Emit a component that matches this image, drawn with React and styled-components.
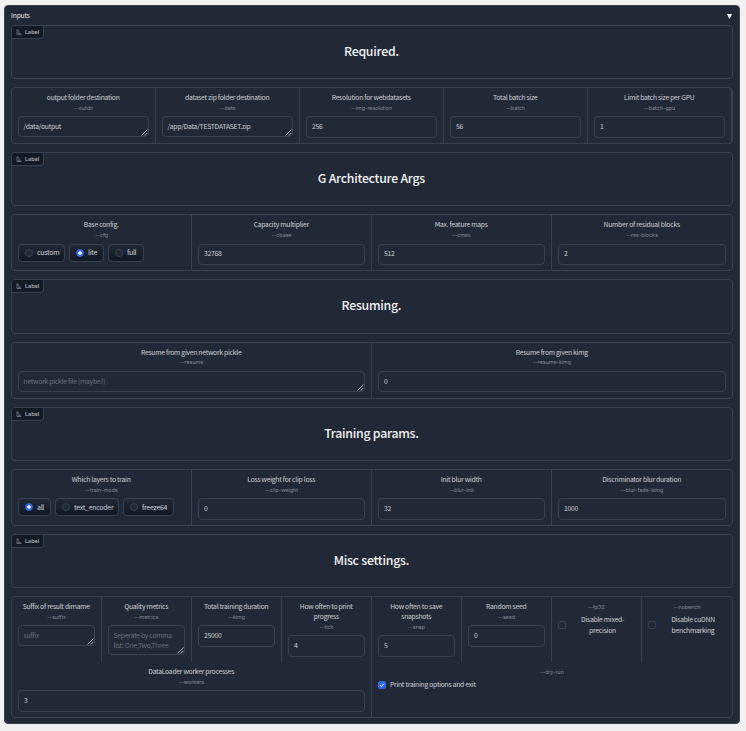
import React from "react";
import styled, { createGlobalStyle } from "styled-components";

const line = "#38424f";
const surface = "#222936";
const sans = '"Noto Sans CJK JP", "Noto Sans CJK SC", "Open Sans", sans-serif';

const GlobalStyle = createGlobalStyle`
  * { box-sizing: border-box; }
  body { margin: 0; background: #f1f1f1; font-family: ${sans}; }
`;

const Page = styled.main`
  width: 746px;
  height: 731px;
  padding: 5px 6px 7px 4px;
  overflow: hidden;
`;

const Panel = styled.section`
  width: 736px;
  height: 719px;
  border: 1px solid ${line};
  border-radius: 4px;
  background: ${surface};
  padding: 0 6px;
  color: #cccfd4;
`;

const PanelHeader = styled.header`
  height: 19px;
  padding-bottom: 1.4px;
  display: flex;
  align-items: center;
  justify-content: space-between;
  font-size: 6.8px;
  letter-spacing: -0.25px;
  line-height: 10px;
  color: #e2e4e8;
`;

const Arrow = styled.svg`
  width: 5px;
  height: 5px;
  margin: 2.4px 1px 0 0;
  fill: #fff;
`;

const Stack = styled.div`
  display: flex;
  flex-direction: column;
  gap: 8px;
`;

const Banner = styled.div`
  position: relative;
  height: 54.2px;
  border: 1px solid ${line};
  border-radius: 4px;
  display: flex;
  align-items: center;
  justify-content: center;
`;

const Heading = styled.h2`
  margin: 0;
  padding: 0 1.2px 2px 0;
  font-size: 12.3px;
  letter-spacing: -0.25px;
  line-height: 16px;
  font-weight: 500;
  color: #f1f2f4;
`;

const Badge = styled.div`
  position: absolute;
  left: 0;
  top: 0;
  width: 32px;
  height: 13px;
  padding: 0.2px 0 0 4px;
  display: flex;
  align-items: center;
  gap: 3px;
  background: #141926;
  border-right: 1px solid ${line};
  border-bottom: 1px solid ${line};
  border-radius: 3px 0 4px 0;
  font-size: 5.4px;
  font-weight: 600;
  line-height: 8px;
  font-family: "Inter", sans-serif;
  color: #a9aeb8;
`;

const BadgeIcon = styled.svg`
  width: 6px;
  height: 6px;
  fill: none;
  stroke: #858b97;
  stroke-width: 0.7;
`;

const FieldGrid = styled.div`
  height: ${(p) => (p.$tall ? "121.8px" : "57px")};
  border: 1px solid ${line};
  border-radius: 4px;
  display: grid;
  grid-template-columns: repeat(${(p) => p.$cols}, 1fr);
  ${(p) => p.$tall && "grid-template-rows: 65px 1fr;"}
`;

const Cell = styled.div`
  grid-column: span ${(p) => p.$span || 1};
  min-width: 0;
  padding: 4.05px 6px 0;
  ${(p) => !p.$open && `border-right: 1px solid ${line};`}
`;

const Caption = styled.div`
  padding-right: 0.6px;
  font-size: 6.8px;
  letter-spacing: -0.27px;
  line-height: 10px;
  text-align: center;
`;

const Hint = styled.div`
  height: 10px;
  padding-top: 0.8px;
  font-family: "Inter", sans-serif;
  font-size: 5.3px;
  line-height: 10px;
  text-align: center;
  color: #858b96;
`;

const ControlWrap = styled.div`
  margin-top: 4.15px;
  position: relative;
`;

const controlBox = `
  display: block;
  width: 100%;
  border: 1px solid ${line};
  border-radius: 4px;
  background: ${surface};
  color: #cccfd4;
  font-family: ${sans};
  font-size: 6.8px;
  letter-spacing: -0.26px;
  outline: none;
  margin: 0;
  &::placeholder { color: #69707d; opacity: 1; }
`;

const Input = styled.input`
  ${controlBox}
  height: 21.7px;
  padding: 0 5px 2.1px;
`;

const TextArea = styled.textarea`
  ${controlBox}
  height: ${(p) => (p.rows > 1 ? "29.8px" : "20.8px")};
  padding: 4px 4.5px;
  line-height: 10px;
  overflow: hidden;
  resize: none;
`;

const Grip = styled.svg`
  position: absolute;
  right: 1px;
  bottom: 1px;
  width: 7px;
  height: 7px;
  fill: none;
  stroke: #d5d7db;
  stroke-width: 0.8;
`;

const Options = styled.div`
  display: flex;
  gap: 4px;
  margin-top: 4.3px;
`;

const Option = styled.label`
  width: ${(p) => p.$w}px;
  height: 18px;
  display: flex;
  align-items: center;
  gap: 4px;
  padding: 0 0 0.8px 6px;
  border: 1px solid ${line};
  border-radius: 4px;
  background: linear-gradient(to bottom, ${surface}, #111725);
  font-size: 7px;
  letter-spacing: -0.3px;
  line-height: 10px;
  white-space: nowrap;
`;

const Radio = styled.span`
  width: 8px;
  height: 8px;
  flex: none;
  margin-top: 0.8px;
  border-radius: 50%;
  border: 1px solid ${(p) => (p.$on ? "#2f66e6" : line)};
  background: ${(p) =>
    p.$on ? "radial-gradient(circle, #fff 0 1.4px, #2f66e6 2px)" : surface};
`;

const CheckRow = styled.label`
  display: flex;
  align-items: center;
  gap: 4px;
  margin-top: ${(p) => (p.$inline ? "3.3px" : "2.6px")};
  min-height: ${(p) => (p.$inline ? "10px" : "22px")};
  font-size: 6.8px;
  letter-spacing: -0.27px;
  line-height: 10.8px;
`;

const CheckText = styled.span`
  ${(p) => !p.$inline && "flex: 1; text-align: center;"}
`;

const Checkbox = styled.span`
  width: 8px;
  height: 8px;
  flex: none;
  display: flex;
  border: 1px solid ${(p) => (p.$on ? "#2f66e6" : line)};
  border-radius: 2px;
  background: ${(p) => (p.$on ? "#2f66e6" : surface)};
`;

const Tick = styled.svg`
  width: 6px;
  height: 6px;
  fill: none;
  stroke: #fff;
  stroke-width: 1;
`;

function Section({ title }) {
  return (
    <Banner>
      <Badge>
        <BadgeIcon viewBox="0 0 6 6">
          <path d="M1 0.5v5h4.5M1 1.2h2M2 3h1.7M2.2 4.4h2.6" />
        </BadgeIcon>
        Label
      </Badge>
      <Heading>{title}</Heading>
    </Banner>
  );
}

function Field({ label, hint, value, area, placeholder, rows = 1, options, ...cell }) {
  return (
    <Cell {...cell}>
      <Caption>{label}</Caption>
      <Hint>{hint}</Hint>
      {options ? (
        <Options>
          {options.map(([name, w, on]) => (
            <Option key={name} $w={w}>
              <Radio $on={on} />
              {name}
            </Option>
          ))}
        </Options>
      ) : (
        <ControlWrap>
          {area ? (
            <>
              <TextArea rows={rows} defaultValue={value} placeholder={placeholder} />
              <Grip viewBox="0 0 7 7">
                <path d="M0.5 6.5l6-6M3.7 6.5l2.8-2.8" />
              </Grip>
            </>
          ) : (
            <Input defaultValue={value} />
          )}
        </ControlWrap>
      )}
    </Cell>
  );
}

function Check({ label, hint, on, inline, ...cell }) {
  return (
    <Cell {...cell}>
      <Hint>{hint}</Hint>
      <CheckRow $inline={inline}>
        <Checkbox $on={on}>
          {on && (
            <Tick viewBox="0 0 6 6">
              <path d="M1 3.2l1.4 1.4L5 1.7" />
            </Tick>
          )}
        </Checkbox>
        <CheckText $inline={inline}>{label}</CheckText>
      </CheckRow>
    </Cell>
  );
}

export default function App() {
  return (
    <Page>
      <GlobalStyle />
      <Panel>
        <PanelHeader>
          Inputs
          <Arrow viewBox="0 0 5 5">
            <path d="M0 0h5L2.5 5z" />
          </Arrow>
        </PanelHeader>
        <Stack>
          <Section title="Required." />
          <FieldGrid $cols={5}>
            <Field label="output folder destination" hint="--outdir" area value="/data/output" />
            <Field label="dataset zip folder destination" hint="--data" area value="/app/Data/TESTDATASET.zip" />
            <Field label="Resolution for webdatasets" hint="--img-resolution" value="256" />
            <Field label="Total batch size" hint="--batch" value="56" />
            <Field label="Limit batch size per GPU" hint="--batch-gpu" value="1" />
          </FieldGrid>
          <Section title="G Architecture Args" />
          <FieldGrid $cols={4}>
            <Field
              label="Base config."
              hint="--cfg"
              options={[["custom", 47], ["lite", 35, true], ["full", 36]]}
            />
            <Field label="Capacity multiplier" hint="--cbase" value="32768" />
            <Field label="Max. feature maps" hint="--cmax" value="512" />
            <Field label="Number of residual blocks" hint="--res-blocks" value="2" $open />
          </FieldGrid>
          <Section title="Resuming." />
          <FieldGrid $cols={2}>
            <Field label="Resume from given network pickle" hint="--resume" area placeholder="network pickle file (maybe?)" />
            <Field label="Resume from given kimg" hint="--resume-kimg" value="0" $open />
          </FieldGrid>
          <Section title="Training params." />
          <FieldGrid $cols={4}>
            <Field
              label="Which layers to train"
              hint="--train-mode"
              options={[["all", 33, true], ["text_encoder", 64], ["freeze64", 51]]}
            />
            <Field label="Loss weight for clip loss" hint="--clip-weight" value="0" />
            <Field label="Init blur width" hint="--blur-init" value="32" />
            <Field label="Discriminator blur duration" hint="--blur-fade-kimg" value="1000" $open />
          </FieldGrid>
          <Section title="Misc settings." />
          <FieldGrid $cols={8} $tall>
            <Field label="Suffix of result dirname" hint="--suffix" area placeholder="suffix" />
            <Field label="Quality metrics" hint="--metrics" area rows={2} placeholder="Seperate by comma list: One,Two,Three" />
            <Field label="Total training duration" hint="--kimg" value="25000" />
            <Field label="How often to print progress" hint="--tick" value="4" />
            <Field label="How often to save snapshots" hint="--snap" value="5" />
            <Field label="Random seed" hint="--seed" value="0" />
            <Check label="Disable mixed-precision" hint="--fp32" />
            <Check label="Disable cuDNN benchmarking" hint="--nobench" $open />
            <Field label="DataLoader worker processes" hint="--workers" value="3" $span={4} />
            <Check label="Print training options and exit" hint="--dry-run" on inline $span={4} $open />
          </FieldGrid>
        </Stack>
      </Panel>
    </Page>
  );
}
